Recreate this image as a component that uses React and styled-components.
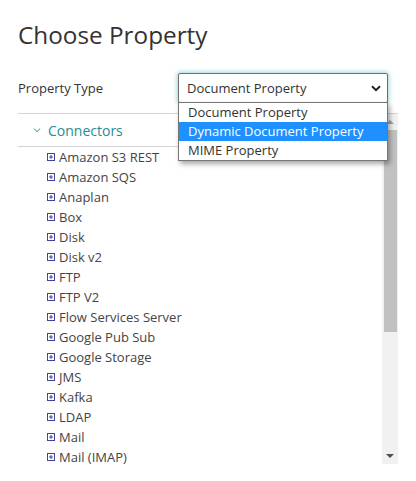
import React from "react";
import styled, { createGlobalStyle } from "styled-components";

const Global = createGlobalStyle`
  html, body { margin: 0; padding: 0; background: #fff; }
  body { font-family: "Open Sans", "Liberation Sans", sans-serif; color: #333; }
  * { box-sizing: border-box; }
`;

const Page = styled.div`
  padding: 19px 18px 0 18px;
  width: 416px;
`;

const Title = styled.h1`
  margin: 0;
  font-size: 24.3px;
  line-height: 32px;
  font-weight: 400;
  color: #333;
`;

const FieldRow = styled.div`
  display: grid;
  grid-template-columns: 160px 210px;
  align-items: center;
  margin-top: 22px;
`;

const Label = styled.label`
  font-size: 13px;
  color: #333;
`;

const SelectWrap = styled.div`
  position: relative;
`;

const SelectBox = styled.div`
  height: 30px;
  border: 1px solid #6f6f6f;
  border-radius: 2px;
  background: #fff;
  box-shadow: 0 0 4px 1px rgba(80, 175, 180, 0.55);
  display: flex;
  align-items: center;
  justify-content: space-between;
  padding: 0 6px 0 8px;
  font-size: 13px;
  color: #333;
`;

const Listbox = styled.ul`
  position: absolute;
  top: 29px;
  left: 0;
  right: 0;
  margin: 0;
  padding: 0;
  list-style: none;
  background: #fff;
  border: 1px solid #767676;
  box-shadow: 2px 3px 5px rgba(0, 0, 0, 0.35);
  z-index: 5;
`;

const Option = styled.li`
  height: 19px;
  line-height: 19px;
  padding-left: 9px;
  font-size: 13px;
  color: ${(p) => (p.$active ? "#fff" : "#333")};
  background: ${(p) => (p.$active ? "#1e90ff" : "transparent")};
`;

const Panel = styled.div`
  margin-top: 10px;
  border-top: 1px solid #d4d4d4;
  height: 351px;
  display: flex;
`;

const PanelBody = styled.div`
  flex: 1;
  min-width: 0;
  overflow: hidden;
`;

const Scrollbar = styled.div`
  width: 16px;
  flex: none;
  background: #f1f1f1;
  display: flex;
  flex-direction: column;
`;

const ScrollButton = styled.div`
  height: 16px;
  flex: none;
  display: flex;
  align-items: center;
  justify-content: center;
`;

const ScrollTrack = styled.div`
  flex: 1;
  padding: 0 1px 0 2px;
`;

const ScrollThumb = styled.div`
  height: 202px;
  background: #c1c1c1;
`;

const GroupHeader = styled.div`
  height: 33px;
  border-bottom: 1px solid #d4d4d4;
  display: flex;
  align-items: center;
  gap: 7px;
  padding-left: 15px;
  font-size: 14px;
  color: #2a8b95;
`;

const ItemList = styled.ul`
  margin: 0;
  padding: 0;
  list-style: none;
`;

const Item = styled.li`
  height: 20px;
  display: flex;
  align-items: center;
  gap: 4px;
  padding-left: 29px;
  font-size: 13px;
  color: #444;
  white-space: nowrap;
`;

const Chevron = () => (
  <svg width="8" height="6" viewBox="0 0 8 6">
    <path d="M0.8 1.5 L4 4.6 L7.2 1.5" fill="none" stroke="#2a8b95" strokeWidth="1" />
  </svg>
);

const SelectArrow = () => (
  <svg width="10" height="7" viewBox="0 0 10 7">
    <path d="M1 1.3 L5 5.2 L9 1.3" fill="none" stroke="#222" strokeWidth="2" />
  </svg>
);

const PlusIcon = () => (
  <svg width="8" height="8" viewBox="0 0 8 8" style={{ marginTop: -1 }}>
    <rect x="0.5" y="0.5" width="7" height="7" fill="#fff" stroke="#40429c" strokeWidth="1" />
    <path d="M2 4 H6 M4 2 V6" stroke="#40429c" strokeWidth="1" />
  </svg>
);

const Triangle = ({ up, color }) => (
  <svg width="8" height="4" viewBox="0 0 8 4">
    <path d={up ? "M0 4 L4 0 L8 4 Z" : "M0 0 L8 0 L4 4 Z"} fill={color} />
  </svg>
);

const connectors = [
  "Amazon S3 REST",
  "Amazon SQS",
  "Anaplan",
  "Box",
  "Disk",
  "Disk v2",
  "FTP",
  "FTP V2",
  "Flow Services Server",
  "Google Pub Sub",
  "Google Storage",
  "JMS",
  "Kafka",
  "LDAP",
  "Mail",
  "Mail (IMAP)",
];

const options = ["Document Property", "Dynamic Document Property", "MIME Property"];

export default function App() {
  return (
    <>
      <Global />
      <Page>
        <Title>Choose Property</Title>
        <FieldRow>
          <Label>Property Type</Label>
          <SelectWrap>
            <SelectBox>
              <span>Document Property</span>
              <SelectArrow />
            </SelectBox>
            <Listbox>
              {options.map((o, i) => (
                <Option key={o} $active={i === 1}>
                  {o}
                </Option>
              ))}
            </Listbox>
          </SelectWrap>
        </FieldRow>
        <Panel>
          <PanelBody>
            <GroupHeader>
              <Chevron />
              <span>Connectors</span>
            </GroupHeader>
            <ItemList>
              {connectors.map((c) => (
                <Item key={c}>
                  <PlusIcon />
                  <span>{c}</span>
                </Item>
              ))}
            </ItemList>
          </PanelBody>
          <Scrollbar>
            <ScrollButton>
              <Triangle up color="#a3a3a3" />
            </ScrollButton>
            <ScrollTrack>
              <ScrollThumb />
            </ScrollTrack>
            <ScrollButton>
              <Triangle color="#505050" />
            </ScrollButton>
          </Scrollbar>
        </Panel>
      </Page>
    </>
  );
}
